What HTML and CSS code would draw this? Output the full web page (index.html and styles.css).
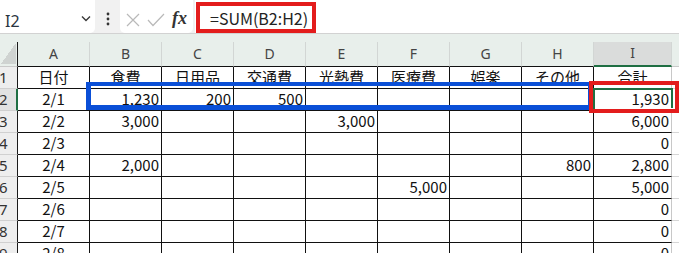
FILE: index.html
```html
<!DOCTYPE html>
<html lang="ja">
<head>
<meta charset="utf-8">
<link rel="stylesheet" href="styles.css">
</head>
<body>
<div class="app">
  <div class="fbar">
    <div class="namebox">
      <span class="nb-text">I2</span>
      <svg class="chev" width="10" height="7" viewBox="0 0 10 7"><path d="M1 1.5 L5 5.5 L9 1.5" fill="none" stroke="#3a3a3a" stroke-width="1.4"/></svg>
    </div>
    <div class="kebab">
      <svg width="4" height="14" viewBox="0 0 4 14"><circle cx="2" cy="2" r="1.4" fill="#333"/><circle cx="2" cy="7" r="1.4" fill="#333"/><circle cx="2" cy="12" r="1.4" fill="#333"/></svg>
    </div>
    <div class="fxbox">
      <svg width="16" height="14" viewBox="0 0 16 14"><path d="M2 1 L14 13 M14 1 L2 13" stroke="#b9b9b9" stroke-width="1.2" fill="none"/></svg>
      <svg width="18" height="14" viewBox="0 0 18 14"><path d="M1 7 L6 12.5 L17 1" stroke="#b9b9b9" stroke-width="1.2" fill="none"/></svg>
      <span class="fx">fx</span>
    </div>
    <div class="formula">=SUM(B2:H2)</div>
  </div>
  <div class="band"></div>
  <div class="sheet">
    <div class="corner"></div>
    <div class="ch">A</div><div class="ch">B</div><div class="ch">C</div><div class="ch">D</div><div class="ch">E</div><div class="ch">F</div><div class="ch">G</div><div class="ch">H</div><div class="ch ch-active">I</div><div class="ch ch-j"></div>

    <div class="rh">1</div>
    <div class="c ctr">日付</div><div class="c ctr">食費</div><div class="c ctr">日用品</div><div class="c ctr">交通費</div><div class="c ctr">光熱費</div><div class="c ctr">医療費</div><div class="c ctr">娯楽</div><div class="c ctr">その他</div><div class="c ctr ci">合計</div><div class="cj"></div>

    <div class="rh rh-active">2</div>
    <div class="c ctr">2/1</div><div class="c num">1,230</div><div class="c num">200</div><div class="c num">500</div><div class="c"></div><div class="c"></div><div class="c"></div><div class="c"></div><div class="c num ci">1,930</div><div class="cj"></div>

    <div class="rh">3</div>
    <div class="c ctr">2/2</div><div class="c num">3,000</div><div class="c"></div><div class="c"></div><div class="c num">3,000</div><div class="c"></div><div class="c"></div><div class="c"></div><div class="c num ci">6,000</div><div class="cj"></div>

    <div class="rh">4</div>
    <div class="c ctr">2/3</div><div class="c"></div><div class="c"></div><div class="c"></div><div class="c"></div><div class="c"></div><div class="c"></div><div class="c"></div><div class="c num ci">0</div><div class="cj"></div>

    <div class="rh">5</div>
    <div class="c ctr">2/4</div><div class="c num">2,000</div><div class="c"></div><div class="c"></div><div class="c"></div><div class="c"></div><div class="c"></div><div class="c num">800</div><div class="c num ci">2,800</div><div class="cj"></div>

    <div class="rh">6</div>
    <div class="c ctr">2/5</div><div class="c"></div><div class="c"></div><div class="c"></div><div class="c"></div><div class="c num">5,000</div><div class="c"></div><div class="c"></div><div class="c num ci">5,000</div><div class="cj"></div>

    <div class="rh">7</div>
    <div class="c ctr">2/6</div><div class="c"></div><div class="c"></div><div class="c"></div><div class="c"></div><div class="c"></div><div class="c"></div><div class="c"></div><div class="c num ci">0</div><div class="cj"></div>

    <div class="rh">8</div>
    <div class="c ctr">2/7</div><div class="c"></div><div class="c"></div><div class="c"></div><div class="c"></div><div class="c"></div><div class="c"></div><div class="c"></div><div class="c num ci">0</div><div class="cj"></div>

    <div class="rh">9</div>
    <div class="c ctr">2/8</div><div class="c"></div><div class="c"></div><div class="c"></div><div class="c"></div><div class="c"></div><div class="c"></div><div class="c"></div><div class="c num ci">0</div><div class="cj"></div>
  </div>

  <div class="sel"><div class="handle"></div></div>
  <div class="mark mark-formula"></div>
  <div class="mark mark-blue"></div>
  <div class="mark mark-total"></div>
</div>
</body>
</html>
```

FILE: styles.css
```css
* { box-sizing: border-box; }
html, body { margin: 0; padding: 0; background: #fff; }
.app {
  position: relative;
  width: 679px;
  height: 253px;
  overflow: hidden;
  font-family: "Noto Sans CJK JP", "Noto Sans", sans-serif;
  color: #111;
}
.fbar {
  height: 34px;
  display: flex;
  background: #f1f1f1;
  border-bottom: 1px solid #d2d2d2;
}
.namebox {
  width: 95px;
  background: #fff;
  border-radius: 0 0 5px 0;
  display: flex;
  align-items: center;
  justify-content: space-between;
  padding: 0 4px 0 5px;
}
.nb-text {
  font-family: "Noto Sans", sans-serif;
  font-size: 16px;
  color: #2a3440;
  margin-top: 8px;
}
.chev { margin-top: 4px; margin-right: 0px; }
.kebab {
  width: 25px;
  display: flex;
  align-items: center;
  justify-content: center;
  padding-top: 5px;
}
.fxbox {
  width: 73px;
  background: #fff;
  border-radius: 0 0 5px 5px;
  display: flex;
  align-items: center;
  gap: 6px;
  padding: 6px 0 0 5px;
}
.fx {
  font-family: "Liberation Serif", serif;
  font-style: italic;
  font-weight: bold;
  font-size: 18px;
  color: #333;
  margin-left: 1px;
  margin-top: -3px;
}
.formula {
  flex: 1;
  background: #fff;
  margin-left: 2px;
  padding: 7px 0 0 15px;
  font-size: 16px;
  color: #222;
  line-height: 22px;
}
.band {
  height: 8px;
  background: #e8efeb;
}
.sheet {
  display: grid;
  grid-template-columns: 18px repeat(8, 72px) 78px 1fr;
  grid-template-rows: 25px repeat(9, 22px);
}
.corner {
  background: #e8efeb linear-gradient(to top left, #cfd3d1 50%, transparent 50%) no-repeat;
  background-size: 15px 21px;
  background-position: right 1px bottom 2px;
  border-bottom: 1px solid #c9c9c9;
  border-right: 1px solid #1a1a1a;
}
.ch {
  background: #e8efeb;
  border-right: 1px solid #d2d6d4;
  border-bottom: 1px solid #111;
  font-family: "Noto Sans", sans-serif;
  font-size: 14px;
  color: #444;
  text-align: center;
  line-height: 23px;
}
.ch-active {
  background: #dadcdb;
  border-bottom: 2px solid #1f6f43;
  line-height: 22px;
}
.ch-j { border-right: none; border-bottom-color: #c9c9c9; }
.rh {
  background: #eeeeee;
  border-right: 1px solid #1a1a1a;
  border-bottom: 1px solid #d0d0d0;
  font-family: "Noto Sans", sans-serif;
  font-size: 15px;
  color: #333;
  line-height: 20px;
  padding-left: 0;
  text-indent: -1px;
  overflow: hidden;
}
.rh-active {
  background: #e2e2e2;
  border-right: 2px solid #1f6f43;
}
.c {
  border-right: 1px solid #111;
  border-bottom: 1px solid #111;
  font-size: 15px;
  line-height: 19px;
  padding: 0 2px 2px 2px;
  white-space: nowrap;
  overflow: hidden;
}
.ctr { text-align: center; }
.num { text-align: right; }
.ci { border-right-color: #c8c8c8; }
.cj { border-bottom: 1px solid #d6d6d6; }

.sel {
  position: absolute;
  left: 593px;
  top: 88px;
  width: 80px;
  height: 23px;
  border: 2px solid #1f6f43;
}
.handle {
  position: absolute;
  right: -4px;
  bottom: -4px;
  width: 5px;
  height: 5px;
  background: #1f6f43;
  border: 1px solid #fff;
}
.mark {
  position: absolute;
  border: 4px solid #e31c1c;
}
.mark-formula { left: 196px; top: 2px; width: 120px; height: 31px; }
.mark-blue { left: 86px; top: 82px; width: 506px; height: 28px; border-color: #0a4fd7; border-width: 4px 4px 5px 5px; }
.mark-total { left: 589px; top: 81px; width: 90px; height: 32px; }
```
